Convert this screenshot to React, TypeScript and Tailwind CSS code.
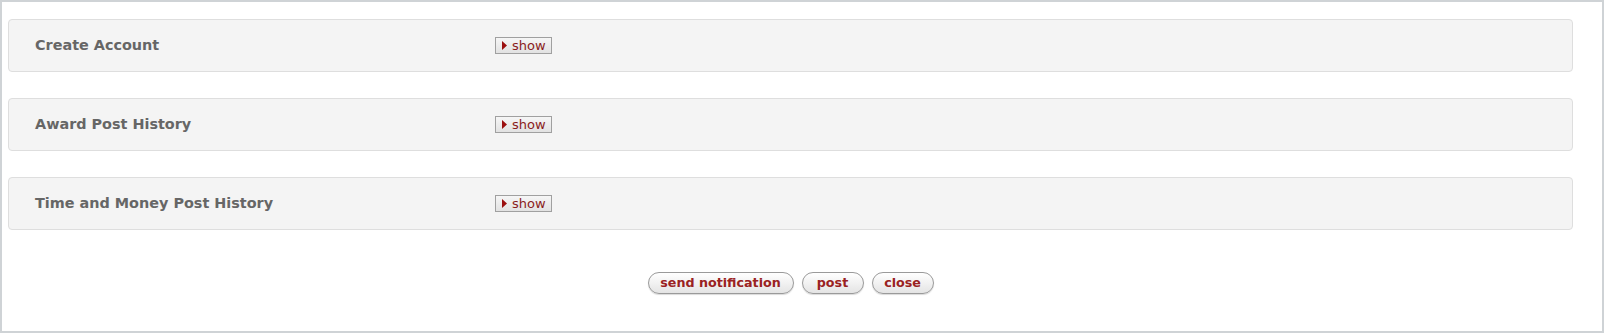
const SECTIONS = ["Create Account", "Award Post History", "Time and Money Post History"];

function ShowToggle() {
  return (
    <button
      type="button"
      className="flex h-[17px] w-[57px] items-center gap-[5px] border border-[#a0a0a0] bg-gradient-to-b from-[#f6f6f6] to-[#e2e2e2] pl-[6px] text-[13px] leading-none text-[#8b1c1c]"
    >
      <svg width="5" height="9" viewBox="0 0 5 9" className="shrink-0">
        <path d="M0 0 L5 4.5 L0 9 Z" fill="#9b0f0f" />
      </svg>
      <span>show</span>
    </button>
  );
}

function Section({ title }: { title: string }) {
  return (
    <div className="flex h-[53px] items-center rounded-[4px] border border-[#dedede] bg-[#f4f4f4] pl-[26px]">
      <div className="w-[460px] text-[14.4px] font-bold text-[#666666]">{title}</div>
      <ShowToggle />
    </div>
  );
}

function PillButton({ label, width }: { label: string; width: string }) {
  return (
    <button
      type="button"
      className={`h-[22px] ${width} rounded-full border border-[#9a9a9a] bg-gradient-to-b from-white to-[#e4e4e4] text-[12.7px] font-bold leading-none text-[#9a2222] shadow-[0_1px_1px_rgba(0,0,0,0.15)]`}
    >
      {label}
    </button>
  );
}

export default function App() {
  return (
    <div
      className="h-[333px] w-[1604px] border-2 border-[#cfd3d6] bg-white"
      style={{ fontFamily: '"DejaVu Sans", Verdana, sans-serif' }}
    >
      <div className="ml-[6px] mr-[29px] flex flex-col gap-[26px] pt-[17px]">
        {SECTIONS.map((s) => (
          <Section key={s} title={s} />
        ))}
      </div>
      <div className="ml-[6px] mr-[29px] mt-[42px] flex justify-center gap-[8px]">
        <PillButton label="send notification" width="w-[146px]" />
        <PillButton label="post" width="w-[62px]" />
        <PillButton label="close" width="w-[62px]" />
      </div>
    </div>
  );
}
